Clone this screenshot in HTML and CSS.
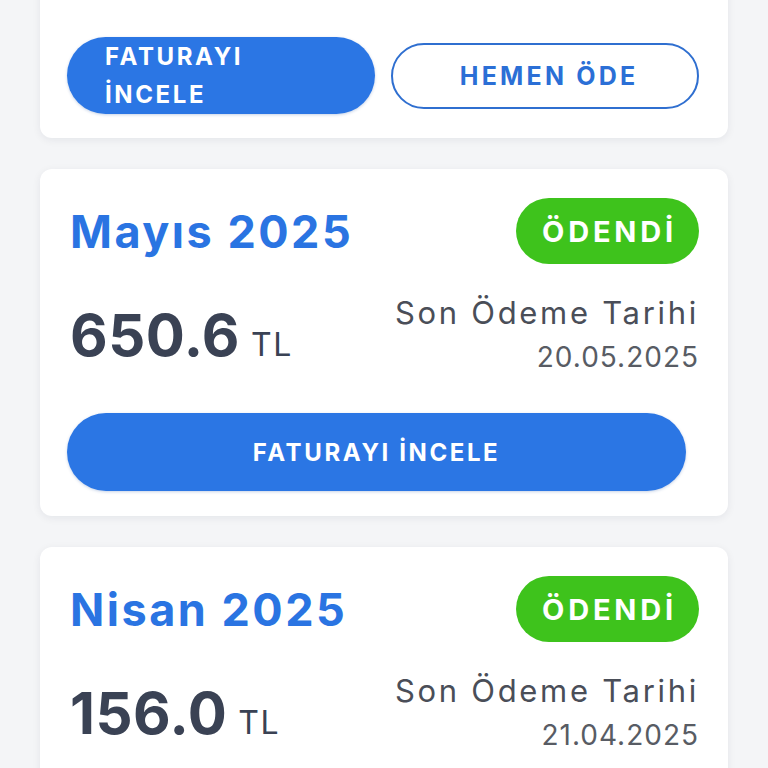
FILE: index.html
```html
<!DOCTYPE html>
<html lang="tr">
<head>
<meta charset="utf-8">
<link rel="stylesheet" href="styles.css">
</head>
<body>
<div class="list">
  <div class="card card-top">
    <div class="actions">
      <button class="btn btn-fill btn-wrap">FATURAYI İNCELE</button>
      <button class="btn btn-outline">HEMEN ÖDE</button>
    </div>
  </div>

  <div class="card">
    <div class="head">
      <div class="month">Mayıs 2025</div>
      <div class="badge">ÖDENDİ</div>
    </div>
    <div class="row">
      <div class="amount">650.6<span class="cur">TL</span></div>
      <div class="due">
        <div class="due-label">Son Ödeme Tarihi</div>
        <div class="due-date">20.05.2025</div>
      </div>
    </div>
    <button class="btn btn-fill btn-wide">FATURAYI İNCELE</button>
  </div>

  <div class="card">
    <div class="head">
      <div class="month">Nisan 2025</div>
      <div class="badge">ÖDENDİ</div>
    </div>
    <div class="row">
      <div class="amount">156.0<span class="cur">TL</span></div>
      <div class="due">
        <div class="due-label">Son Ödeme Tarihi</div>
        <div class="due-date">21.04.2025</div>
      </div>
    </div>
    <button class="btn btn-fill btn-wide">FATURAYI İNCELE</button>
  </div>
</div>
</body>
</html>
```

FILE: styles.css
```css
* { box-sizing: border-box; }
html, body { margin: 0; padding: 0; }
body {
  background: #f4f5f7;
  font-family: Inter, "Noto Sans", sans-serif;
  height: 768px;
  overflow: hidden;
}
.list {
  padding: 0 40px;
  display: flex;
  flex-direction: column;
  gap: 31px;
}
.card {
  background: #ffffff;
  border-radius: 12px;
  box-shadow: 0 2px 8px rgba(20, 30, 50, 0.07);
  padding: 29px 29px 25px 27px;
}
.card-top {
  margin-top: -40px;
  padding-top: 77px;
  padding-bottom: 24px;
}
.actions {
  display: flex;
  align-items: center;
  gap: 16px;
}
.btn {
  font-family: inherit;
  font-weight: 700;
  font-size: 24px;
  letter-spacing: 2.6px;
  border-radius: 40px;
  cursor: pointer;
}
.btn-fill {
  background: #2b76e4;
  color: #ffffff;
  border: none;
  box-shadow: 0 1px 3px rgba(30, 80, 160, 0.25);
}
.btn-wrap {
  width: 309px;
  height: 77px;
  text-align: left;
  padding: 0 60px 0 38px;
  line-height: 38px;
}
.btn-outline {
  width: 309px;
  height: 66px;
  background: #ffffff;
  color: #2b6fd6;
  border: 2px solid #2f6fd0;
  padding: 0 0 0 8px;
  font-size: 25px;
  letter-spacing: 3.2px;
}
.head {
  display: flex;
  justify-content: space-between;
  align-items: center;
  height: 66px;
}
.month {
  color: #2a74e2;
  font-weight: 700;
  font-size: 45px;
  letter-spacing: 2.5px;
  padding-left: 3px;
}
.badge {
  background: #3ec31c;
  color: #ffffff;
  font-weight: 700;
  font-size: 29px;
  letter-spacing: 3.8px;
  height: 66px;
  width: 183px;
  border-radius: 33px;
  display: flex;
  align-items: center;
  justify-content: center;
  padding-left: 4px;
}
.row {
  display: flex;
  justify-content: space-between;
  align-items: center;
  margin-top: 26px;
}
.amount {
  color: #3a4254;
  font-weight: 700;
  font-size: 58px;
  line-height: 1;
  letter-spacing: 0.5px;
  padding-left: 3px;
}
.cur {
  font-weight: 400;
  font-size: 32px;
  margin-left: 11px;
  letter-spacing: 1.5px;
}
.due {
  text-align: right;
  color: #4a4e58;
  line-height: 45px;
}
.due-label {
  font-size: 31px;
  letter-spacing: 2.7px;
}
.due-date {
  font-size: 28px;
  color: #585c64;
  letter-spacing: 1px;
}
.btn-wide {
  display: block;
  width: calc(100% - 13px);
  height: 78px;
  margin-top: 33px;
  text-align: center;
}
```
